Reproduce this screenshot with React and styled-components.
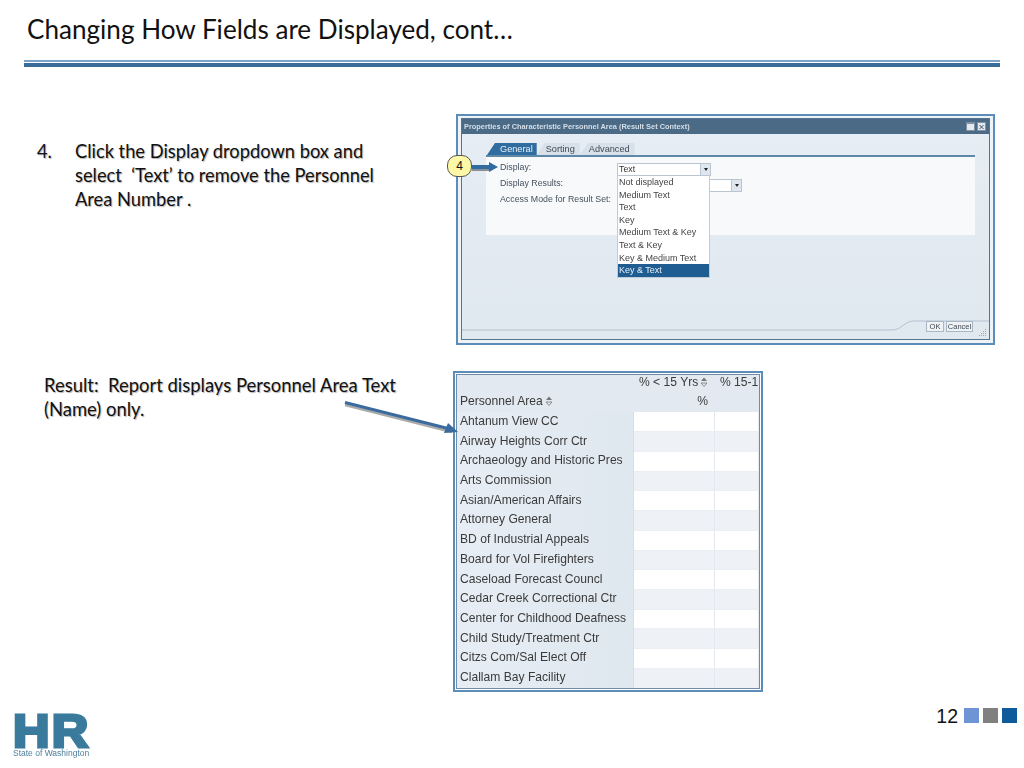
import React from 'react';
import styled, { createGlobalStyle } from 'styled-components';
import { X } from 'lucide-react';

const GlobalStyle = createGlobalStyle`
  html, body {
    margin: 0;
    padding: 0;
    background: #fff;
  }
  * {
    box-sizing: border-box;
  }
`;

const Page = styled.div`
  position: relative;
  width: 1024px;
  height: 768px;
  overflow: hidden;
  display: flex;
  flex-direction: column;
  background: #fff;
  color: #111;
  font-family: "Lato", "Open Sans", sans-serif;
`;

const Title = styled.h1`
  margin: 0;
  padding: 12px 0 0 27px;
  height: 60px;
  font-size: 26.1px;
  line-height: 34px;
  font-weight: 400;
  color: #111;
`;

const Rule = styled.div`
  margin: 0 24px;
  height: 7px;
  border-top: 2px solid #7ba3c8;
  &::after {
    content: '';
    display: block;
    margin-top: 1px;
    height: 4px;
    background: #3b6b98;
  }
`;

const Body = styled.main`
  flex: 1;
  display: grid;
  grid-template-columns: 453px 1fr;
  grid-template-rows: 231px 321px;
  row-gap: 26px;
  padding-top: 47px;
`;

const Step = styled.div`
  display: grid;
  grid-template-columns: 38px 320px;
  align-content: start;
  padding: 25px 0 0 37px;
  font-size: 18.3px;
  line-height: 24px;
  text-shadow: 1px 1px 1px #b4b4b4;
`;

const StepText = styled.div`
  white-space: pre-wrap;
`;

const Result = styled.div`
  padding: 2px 0 0 44px;
  width: 410px;
  font-size: 18.45px;
  line-height: 24px;
  white-space: pre-wrap;
  text-shadow: 1px 1px 1px #b4b4b4;
`;

const DialogWrap = styled.div`
  position: relative;
  margin-left: 3px;
  width: 539px;
  height: 231px;
`;

const Dialog = styled.section`
  height: 100%;
  border: 2px solid #5b8db8;
  padding: 2px 3px 3px;
  background: #eef3f8;
  font-family: "Liberation Sans", Arial, sans-serif;
  filter: blur(0.3px);
`;

const DialogInner = styled.div`
  height: 100%;
  display: flex;
  flex-direction: column;
  border: 1px solid #54748f;
  background: linear-gradient(#e6edf4, #e0e8f0);
`;

const TitleBar = styled.header`
  height: 15px;
  flex: none;
  display: flex;
  align-items: center;
  justify-content: space-between;
  padding: 0 3px 0 2px;
  background: #4a6a85;
  color: #d5dfe9;
  font-size: 7.4px;
  font-weight: 700;
`;

const WinButtons = styled.div`
  display: flex;
  gap: 2px;
`;

const WinButton = styled.span`
  width: 9px;
  height: 9px;
  display: flex;
  align-items: center;
  justify-content: center;
  background: #e3e9ef;
  border: 1px solid #7d92a5;
  border-top-width: ${(p) => (p.$max ? '2px' : '1px')};
  color: #2c3e50;
`;

const Tabs = styled.nav`
  display: flex;
  align-items: flex-end;
  height: 12px;
  margin: 9px 0 0 25px;
  flex: none;
`;

const Tab = styled.span`
  height: 12px;
  padding: ${(p) => (p.$active ? '0 4px 0 13px' : '0 5px 0 9px')};
  font-size: 9.2px;
  line-height: 12px;
  color: ${(p) => (p.$active ? '#e8f0f7' : '#3e4a56')};
  background: ${(p) => (p.$active ? '#2f6c9f' : '#d8e1ea')};
  clip-path: polygon(8px 0, 100% 0, 100% 100%, 0 100%);
`;

const Panel = styled.div`
  position: relative;
  flex: none;
  height: 80px;
  margin: 0 14px 0 24px;
  padding: 2px 0 0 14px;
  border-top: 2px solid #5f88a8;
  background: #f7f9fb;
  display: grid;
  grid-template-columns: 117px 1fr;
  grid-auto-rows: 16px;
  align-items: center;
  font-size: 8.8px;
  color: #44505c;
`;

const Select = styled.div`
  width: ${(p) => p.$width}px;
  height: 13px;
  margin-top: 4px;
  display: flex;
  align-items: center;
  justify-content: space-between;
  padding-left: 1px;
  background: #fff;
  border: 1px solid #b9c5d1;
  color: #333;
`;

const SelectArrow = styled.span`
  width: 10px;
  height: 100%;
  display: flex;
  align-items: center;
  justify-content: center;
  background: #dfe6ed;
  border-left: 1px solid #b9c5d1;
  &::after {
    content: '';
    border: 2.5px solid transparent;
    border-top: 3px solid #222;
    border-bottom: 0;
  }
`;

const Menu = styled.ul`
  position: absolute;
  left: 131px;
  top: 19px;
  width: 93px;
  margin: 0;
  padding: 0;
  list-style: none;
  background: #fff;
  border: 1px solid #c3ccd6;
  border-top: 0;
`;

const MenuItem = styled.li`
  height: 12.6px;
  line-height: 12.6px;
  padding-left: 1px;
  font-size: 9px;
  color: ${(p) => (p.$selected ? '#e6eef6' : '#444')};
  background: ${(p) => (p.$selected ? '#1f5c91' : 'transparent')};
`;

const DialogFooter = styled.footer`
  position: relative;
  margin-top: auto;
  height: 24px;
  display: flex;
  justify-content: flex-end;
  align-items: flex-end;
  gap: 2px;
  padding: 0 16px 7px 0;
`;

const FooterCurve = styled.svg`
  position: absolute;
  left: 0;
  top: 0;
  width: 100%;
  height: 24px;
`;

const DialogButton = styled.span`
  position: relative;
  width: ${(p) => p.$width}px;
  height: 11px;
  background: #f0f3f6;
  border: 1px solid #a9b6c3;
  font-size: 7.5px;
  line-height: 9px;
  text-align: center;
  color: #3c4750;
`;

const Grip = styled.svg`
  position: absolute;
  right: 2px;
  bottom: 2px;
  width: 9px;
  height: 9px;
`;

const Badge = styled.div`
  position: absolute;
  left: -9px;
  top: 41px;
  width: 25px;
  height: 22px;
  border-radius: 10px;
  border: 1px solid #555;
  background: #fdf8a6;
  font: 12px/20px "Liberation Sans", Arial, sans-serif;
  text-align: center;
  color: #111;
`;

const BadgeArrow = styled.svg`
  position: absolute;
  left: 16px;
  top: 46px;
  width: 28px;
  height: 14px;
`;

const ReportWrap = styled.div`
  width: 310px;
  height: 321px;
  border: 2px solid #5b8db8;
  padding: 1px;
  background: #fff;
`;

const ReportInner = styled.div`
  height: 100%;
  overflow: hidden;
  border: 1px solid #6f8da8;
  background: #e4ebf2;
`;

const Table = styled.table`
  width: 302px;
  table-layout: fixed;
  border-collapse: collapse;
  font-family: "Liberation Sans", Arial, sans-serif;
  font-size: 12.1px;
  color: #3a3a3a;
  filter: blur(0.25px);
`;

const HeadCell = styled.td`
  height: ${(p) => p.$h}px;
  padding: 0 ${(p) => p.$pr ?? 0}px 2px ${(p) => p.$pl ?? 0}px;
  text-align: ${(p) => p.$align || 'left'};
  white-space: nowrap;
  overflow: hidden;
  background: #e2e9f0;
`;

const NameCell = styled.td`
  height: 19.72px;
  padding: 0 0 2px 3px;
  white-space: nowrap;
  overflow: hidden;
  background: linear-gradient(90deg, #e6edf4, #e0e8ef);
  border-right: 1px solid #d5dee7;
`;

const ValueCell = styled.td`
  height: 19.72px;
  padding: 0;
  background: ${(p) => (p.$even ? '#eef2f6' : '#fff')};
  border-right: 1px solid #e3e9ef;
  border-bottom: 1px solid #ebeff3;
`;

const SortIcon = styled.svg`
  width: 8px;
  height: 10px;
  margin-left: 2px;
  vertical-align: -1px;
`;

const PageFooter = styled.footer`
  height: 56px;
  display: flex;
  justify-content: space-between;
  align-items: flex-start;
  padding: 0 7px 0 13px;
`;

const Logo = styled.div`
  display: flex;
  flex-direction: column;
  width: 80px;
  margin-top: 1px;
  color: #3a7a9c;
  font-family: "Liberation Sans", Arial, sans-serif;
  filter: blur(0.3px);
`;

const LogoMark = styled.span`
  font-size: 46px;
  line-height: 36px;
  height: 36px;
  font-weight: 700;
  letter-spacing: 2px;
  -webkit-text-stroke: 3px #3a7a9c;
  transform: scaleX(1.1);
  transform-origin: left center;
`;

const LogoText = styled.span`
  font-size: 8.5px;
  line-height: 9px;
  color: #4c7f9c;
  white-space: nowrap;
`;

const Pager = styled.div`
  display: flex;
  align-items: center;
  gap: 4px;
  margin-top: -7px;
  font: 19.5px/22px "Liberation Sans", Arial, sans-serif;
  color: #111;
`;

const PageNumber = styled.span`
  margin-right: 2px;
`;

const PagerSquare = styled.span`
  width: 15px;
  height: 15px;
  background: ${(p) => p.$color};
  margin-top: -1px;
`;

const LongArrow = styled.svg`
  position: absolute;
  left: 340px;
  top: 396px;
  width: 124px;
  height: 44px;
`;

const displayOptions = [
  'Not displayed',
  'Medium Text',
  'Text',
  'Key',
  'Medium Text & Key',
  'Text & Key',
  'Key & Medium Text',
  'Key & Text',
];

const areas = [
  'Ahtanum View CC',
  'Airway Heights Corr Ctr',
  'Archaeology and Historic Pres',
  'Arts Commission',
  'Asian/American Affairs',
  'Attorney General',
  'BD of Industrial Appeals',
  'Board for Vol Firefighters',
  'Caseload Forecast Councl',
  'Cedar Creek Correctional Ctr',
  'Center for Childhood Deafness',
  'Child Study/Treatment Ctr',
  'Citzs Com/Sal Elect Off',
  'Clallam Bay Facility',
];

const Sort = () => (
  <SortIcon viewBox="0 0 8 10">
    <path d="M4 0.5 L7 4 H1 Z" fill="#777" />
    <path d="M1 6 H7 L4 9.5 Z" fill="none" stroke="#777" strokeWidth="0.8" />
  </SortIcon>
);

function App() {
  return (
    <Page>
      <GlobalStyle />
      <Title>Changing How Fields are Displayed, cont…</Title>
      <Rule />

      <Body>
        <Step>
          <span>4.</span>
          <StepText>Click the Display dropdown box and select  ‘Text’ to remove the Personnel Area Number .</StepText>
        </Step>

        <DialogWrap>
          <Dialog>
            <DialogInner>
              <TitleBar>
                Properties of Characteristic Personnel Area (Result Set Context)
                <WinButtons>
                  <WinButton $max />
                  <WinButton>
                    <X size={8} strokeWidth={3} />
                  </WinButton>
                </WinButtons>
              </TitleBar>
              <Tabs>
                <Tab $active>General</Tab>
                <Tab>Sorting</Tab>
                <Tab>Advanced</Tab>
              </Tabs>
              <Panel>
                <span>Display:</span>
                <Select $width={94}>
                  Text
                  <SelectArrow />
                </Select>
                <span>Display Results:</span>
                <Select $width={125}>
                  <span />
                  <SelectArrow />
                </Select>
                <span>Access Mode for Result Set:</span>
                <span />
                <Menu>
                  {displayOptions.map((o, i) => (
                    <MenuItem key={o} $selected={i === displayOptions.length - 1}>
                      {o}
                    </MenuItem>
                  ))}
                </Menu>
              </Panel>
              <DialogFooter>
                <FooterCurve viewBox="0 0 527 24" preserveAspectRatio="none">
                  <path
                    d="M0 15 H430 C440 15 442 6 452 6 H527"
                    fill="none"
                    stroke="#b4c1ce"
                    strokeWidth="1"
                  />
                </FooterCurve>
                <DialogButton $width={18}>OK</DialogButton>
                <DialogButton $width={27}>Cancel</DialogButton>
                <Grip viewBox="0 0 9 9">
                  <g fill="#9aa8b6">
                    <rect x="7" y="1" width="1" height="1" />
                    <rect x="5" y="3" width="1" height="1" />
                    <rect x="7" y="3" width="1" height="1" />
                    <rect x="3" y="5" width="1" height="1" />
                    <rect x="5" y="5" width="1" height="1" />
                    <rect x="7" y="5" width="1" height="1" />
                    <rect x="1" y="7" width="1" height="1" />
                    <rect x="3" y="7" width="1" height="1" />
                    <rect x="5" y="7" width="1" height="1" />
                    <rect x="7" y="7" width="1" height="1" />
                  </g>
                </Grip>
              </DialogFooter>
            </DialogInner>
          </Dialog>
          <Badge>4</Badge>
          <BadgeArrow viewBox="0 0 28 14">
            <path d="M0 7 H18 V9 H0 Z" fill="#8b8f93" transform="translate(0 2)" />
            <path d="M0 5 H17 V2 L26 7 L17 12 V9 H0 Z" fill="#2f6aa0" />
          </BadgeArrow>
        </DialogWrap>

        <Result>{'Result:  Report displays Personnel Area Text\n(Name) only.'}</Result>

        <ReportWrap>
          <ReportInner>
            <Table>
              <colgroup>
                <col style={{ width: 176 }} />
                <col style={{ width: 81 }} />
                <col />
              </colgroup>
              <tbody>
                <tr>
                  <HeadCell $h={16} />
                  <HeadCell $h={16} $pl={6}>
                    % &lt; 15 Yrs
                    <Sort />
                  </HeadCell>
                  <HeadCell $h={16} $pl={6}>
                    % 15-1
                  </HeadCell>
                </tr>
                <tr>
                  <HeadCell $h={21} $pl={3}>
                    Personnel Area
                    <Sort />
                  </HeadCell>
                  <HeadCell $h={21} $align="right" $pr={6}>
                    %
                  </HeadCell>
                  <HeadCell $h={21} />
                </tr>
                {areas.map((name, i) => (
                  <tr key={name}>
                    <NameCell>{name}</NameCell>
                    <ValueCell $even={i % 2 === 1} />
                    <ValueCell $even={i % 2 === 1} />
                  </tr>
                ))}
              </tbody>
            </Table>
          </ReportInner>
        </ReportWrap>
      </Body>

      <PageFooter>
        <Logo>
          <LogoMark>HR</LogoMark>
          <LogoText>State of Washington</LogoText>
        </Logo>
        <Pager>
          <PageNumber>12</PageNumber>
          <PagerSquare $color="#6f94d6" />
          <PagerSquare $color="#808080" />
          <PagerSquare $color="#0f5a9a" />
        </Pager>
      </PageFooter>

      <LongArrow viewBox="0 0 124 44">
        <path d="M5 9 L112 36" stroke="#aaaaaa" strokeWidth="2.5" fill="none" />
        <path d="M5 6.5 L108 32.5" stroke="#3a6a9e" strokeWidth="3" fill="none" />
        <path d="M118 36 L104 37 L108 27 Z" fill="#3a6a9e" />
      </LongArrow>
    </Page>
  );
}

export default App;
